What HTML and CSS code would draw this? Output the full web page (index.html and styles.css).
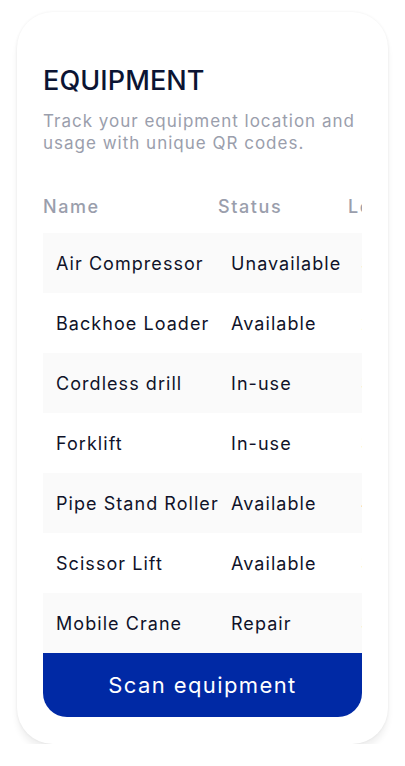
FILE: index.html
```html
<!DOCTYPE html>
<html lang="en">
<head>
    <meta charset="UTF-8">
    <meta name="viewport" content="width=device-width, initial-scale=1.0">
    <title>Equipment</title>

    <!-- CSS -->
    <link rel="stylesheet" href="styles.css">
</head>
<body>

    <!-- Card -->
    <div class="phone-card">
        <h1 class="title">EQUIPMENT</h1>
        <p class="subtitle">Track your equipment location and usage with unique QR codes.</p>

        <!-- Equipment table -->
        <div class="table-wrap">
            <table class="equipment-table">
                <colgroup>
                    <col class="col-name">
                    <col class="col-status">
                    <col class="col-location">
                </colgroup>
                <thead>
                    <tr>
                        <th>Name</th>
                        <th>Status</th>
                        <th>Location</th>
                    </tr>
                </thead>
                <tbody>
                    <tr><td>Air Compressor</td><td>Unavailable</td><td>3rd Street Yard</td></tr>
                    <tr><td>Backhoe Loader</td><td>Available</td><td>2nd Avenue Site</td></tr>
                    <tr><td>Cordless drill</td><td>In-use</td><td>3rd Street Yard</td></tr>
                    <tr><td>Forklift</td><td>In-use</td><td>3rd Street Yard</td></tr>
                    <tr><td>Pipe Stand Roller</td><td>Available</td><td>4th Warehouse</td></tr>
                    <tr><td>Scissor Lift</td><td>Available</td><td>3rd Street Yard</td></tr>
                    <tr><td>Mobile Crane</td><td>Repair</td><td>3rd Street Yard</td></tr>
                </tbody>
            </table>
        </div>

        <button class="scan-btn">Scan equipment</button>
    </div>

</body>
</html>
```

FILE: styles.css
```css
/* General styles */
body {
    font-family: Inter, "Open Sans", sans-serif;
    margin: 0;
    padding: 0;
    background-color: #ffffff;
    color: #0f1229;
}

/* Card */
.phone-card {
    width: 371px;
    margin: 12px 0 0 17px;
    padding: 52px 26px 27px 26px;
    box-sizing: border-box;
    background-color: #ffffff;
    border-radius: 36px;
    box-shadow: 0 0 3px rgba(0, 0, 0, 0.07), 0 7px 6px rgba(0, 0, 0, 0.06);
}

.title {
    margin: 0;
    font-size: 27px;
    line-height: 34px;
    font-weight: 500;
    letter-spacing: 0.1px;
    color: #0b1433;
}

.subtitle {
    margin: 12px 0 0 0;
    font-size: 17px;
    line-height: 22px;
    letter-spacing: 1px;
    color: #9a9eac;
}

/* Table */
.table-wrap {
    margin-top: 36px;
    overflow: hidden;
}

.equipment-table {
    width: 440px;
    table-layout: fixed;
    border-collapse: collapse;
    font-size: 18px;
    letter-spacing: 1.05px;
}

.col-name { width: 175px; }
.col-status { width: 130px; }
.col-location { width: 135px; }

.equipment-table th {
    text-align: left;
    font-weight: 500;
    color: #9a9eac;
    line-height: 34px;
    padding: 0 0 9px 0;
    letter-spacing: 1.6px;
    white-space: nowrap;
}

.equipment-table td {
    height: 60px;
    padding: 0 0 0 13px;
    white-space: nowrap;
}

.equipment-table tbody tr:nth-child(odd) {
    background-color: #fafafa;
}

/* Button */
.scan-btn {
    display: block;
    width: 100%;
    height: 64px;
    border: none;
    border-radius: 0 0 24px 24px;
    background-color: #0029a5;
    color: #ffffff;
    font-family: inherit;
    font-size: 22px;
    letter-spacing: 1.4px;
    cursor: pointer;
}
```
